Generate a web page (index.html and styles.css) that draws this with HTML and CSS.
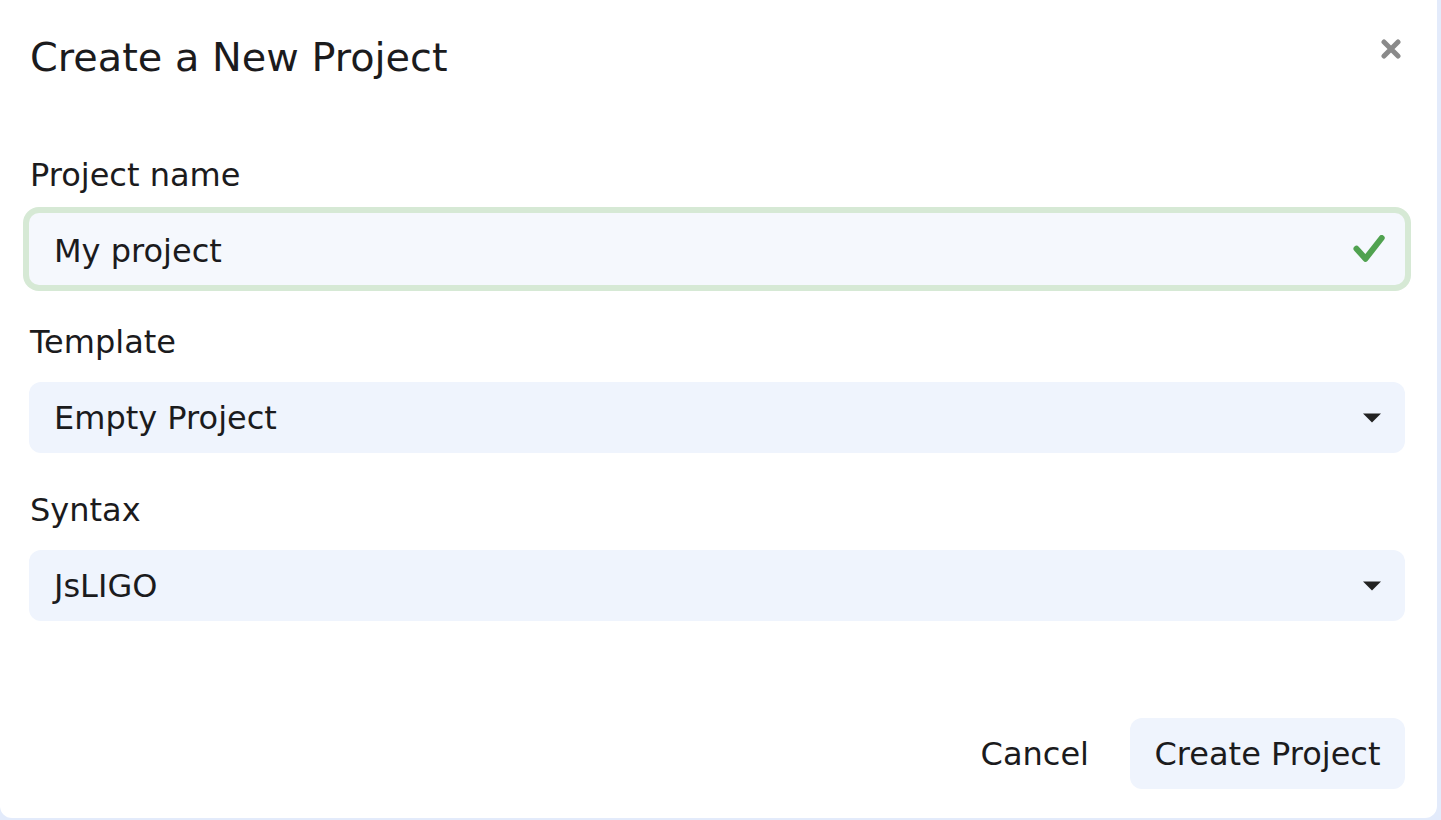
FILE: index.html
```html
<!DOCTYPE html>
<html lang="en">
<head>
<meta charset="utf-8">
<title>Create a New Project</title>
<link rel="stylesheet" href="styles.css">
</head>
<body>
<div class="modal">
  <div class="modal-header">
    <h1 class="modal-title">Create a New Project</h1>
    <button class="close-btn" aria-label="Close">
      <svg width="20" height="20" viewBox="0 0 20 20"><path d="M3 3 L17 17 M17 3 L3 17" stroke="#8a8a8a" stroke-width="5" stroke-linecap="round" fill="none"/></svg>
    </button>
  </div>
  <div class="modal-body">
    <div class="field field-input">
      <label class="field-label">Project name</label>
      <div class="control control-valid">
        <input class="control-input" type="text" value="My project">
        <svg class="check-icon" width="32" height="28" viewBox="0 0 32 28"><path d="M3.5 13.7 L12.5 23.7 L28.7 3" stroke="#50a250" stroke-width="6" stroke-linecap="round" stroke-linejoin="round" fill="none"/></svg>
      </div>
    </div>
    <div class="field">
      <label class="field-label">Template</label>
      <div class="control control-select">
        <span class="control-value">Empty Project</span>
        <svg class="caret" width="18" height="10" viewBox="0 0 18 10"><polygon points="0,0.5 18,0.5 9,9.5" fill="#222"/></svg>
      </div>
    </div>
    <div class="field">
      <label class="field-label">Syntax</label>
      <div class="control control-select">
        <span class="control-value">JsLIGO</span>
        <svg class="caret" width="18" height="10" viewBox="0 0 18 10"><polygon points="0,0.5 18,0.5 9,9.5" fill="#222"/></svg>
      </div>
    </div>
  </div>
  <div class="modal-footer">
    <button class="btn btn-plain">Cancel</button>
    <button class="btn btn-primary">Create Project</button>
  </div>
</div>
</body>
</html>
```
FILE: styles.css
```css
* { box-sizing: border-box; }

html, body {
  margin: 0;
  padding: 0;
}

body {
  width: 1441px;
  height: 820px;
  overflow: hidden;
  background: #e3ebfb;
  font-family: "DejaVu Sans", "Noto Sans", sans-serif;
  color: #1b1b1d;
}

.modal {
  width: 1437px;
  height: 818px;
  background: #ffffff;
  border-radius: 0 0 12px 12px;
  padding: 33px 32px 29px 29px;
  display: flex;
  flex-direction: column;
}

.modal-header {
  display: flex;
  justify-content: space-between;
  align-items: flex-start;
}

.modal-title {
  margin: 0 0 0 1px;
  font-size: 39.8px;
  line-height: 48px;
  font-weight: 400;
  color: #1b1b1d;
}

.close-btn {
  margin: 6px 4px 0 0;
  padding: 0;
  border: 0;
  background: none;
  width: 20px;
  height: 20px;
  display: flex;
}

.modal-body {
  margin-top: 74px;
  display: flex;
  flex-direction: column;
  gap: 37px;
}

.field {
  display: flex;
  flex-direction: column;
  gap: 20px;
}

.field-input {
  gap: 18px;
}

.field-label {
  font-size: 32px;
  line-height: 40px;
  padding-left: 1px;
}

.control {
  width: 1376px;
  display: flex;
  align-items: center;
  border-radius: 12px;
  font-size: 32px;
}

.control-valid {
  height: 72px;
  background: #f5f8fd;
  box-shadow: 0 0 0 6px #d6e9d5;
  border-radius: 10px;
  padding: 0 20px 0 25px;
}

.control-input {
  flex: 1;
  border: 0;
  outline: none;
  background: transparent;
  font: inherit;
  color: #1b1b1d;
  padding: 3px 0 0 0;
  height: 44px;
}

.check-icon {
  flex: none;
}

.control-select {
  height: 71px;
  background: #eff4fd;
  padding: 0 24px 0 25px;
  justify-content: space-between;
}

.control-value {
  line-height: 40px;
}

.caret {
  flex: none;
  margin-top: 1px;
}

.modal-footer {
  margin-top: auto;
  display: flex;
  justify-content: flex-end;
  align-items: center;
  gap: 17px;
}

.btn {
  height: 71px;
  border: 0;
  border-radius: 12px;
  font-family: inherit;
  font-size: 32px;
  color: #1b1b1d;
  padding: 0 24px;
  background: transparent;
}

.btn-primary {
  background: #eff4fd;
  width: 275px;
}
```
